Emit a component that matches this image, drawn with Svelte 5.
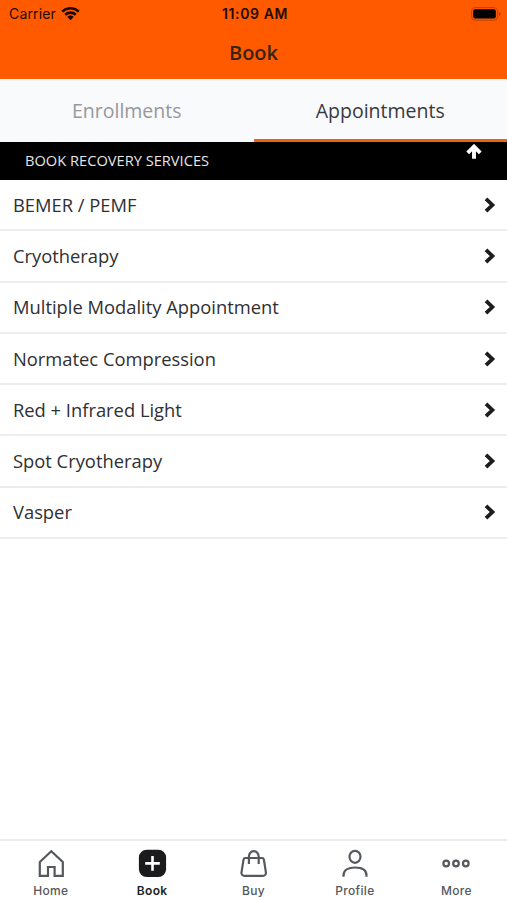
<script lang="ts">
  const tabs = ['Enrollments', 'Appointments'];
  let activeTab = $state('Appointments');

  const services = [
    'BEMER / PEMF',
    'Cryotherapy',
    'Multiple Modality Appointment',
    'Normatec Compression',
    'Red + Infrared Light',
    'Spot Cryotherapy',
    'Vasper'
  ];

  const navItems = ['Home', 'Book', 'Buy', 'Profile', 'More'];
  let activeNav = $state('Book');
</script>

<div class="app">
  <header class="header">
    <div class="status-bar">
      <div class="carrier">
        <span>Carrier</span>
        <svg class="wifi" width="19" height="14" viewBox="0 0 19 14">
          <path d="M1.2 4.6a12 12 0 0 1 16.6 0M4.2 7.7a7.7 7.7 0 0 1 10.6 0" fill="none" stroke="currentColor" stroke-width="2.6" />
          <path d="M6.2 9.8a4.8 4.8 0 0 1 6.6 0L9.5 13.2z" fill="currentColor" />
        </svg>
      </div>
      <span class="time">11:09 AM</span>
      <div class="battery">
        <svg width="30" height="14" viewBox="0 0 30 14">
          <rect x="0.6" y="0.6" width="26" height="12.6" rx="3.6" fill="none" stroke="#b84206" stroke-width="1" />
          <rect x="2.2" y="2.3" width="22.6" height="9.2" rx="2" fill="#000" />
          <path d="M28 5v4c1.8-.5 1.8-3.5 0-4z" fill="#a33a05" />
        </svg>
      </div>
    </div>
    <h1 class="title">Book</h1>
  </header>

  <div class="tabs">
    {#each tabs as tab}
      <button class="tab" class:tab-active={activeTab === tab} onclick={() => (activeTab = tab)}>
        {tab}
      </button>
    {/each}
  </div>

  <main class="content">
    <div class="section-head">
      <h2 class="section-title">BOOK RECOVERY SERVICES</h2>
      <svg class="arrow-up" width="16" height="16" viewBox="0 0 16 16">
        <path d="M1.7 8.8 8 2.6l6.3 6.2M8 3.2v11.6" fill="none" stroke="#fff" stroke-width="3.9" />
      </svg>
    </div>

    <div class="list">
      {#each services as service}
        <button class="row">
          <span>{service}</span>
          <svg width="12" height="16" viewBox="0 0 12 16">
            <path d="M2 1.8 8.4 8 2 14.2" fill="none" stroke="#1d1d1d" stroke-width="3.8" />
          </svg>
        </button>
      {/each}
    </div>
  </main>

  <nav class="nav">
    {#each navItems as item}
      <button class="nav-item" class:nav-active={activeNav === item} onclick={() => (activeNav = item)}>
        <svg width="30" height="30" viewBox="0 0 30 30" fill="none" stroke="currentColor" stroke-width="2.2">
          {#if item === 'Home'}
            <path d="M3.8 13 15.3 2.2 26.8 13v13.900h-8.200v-8.900h-6.600v8.900H3.800z" />
          {:else if item === 'Book'}
            <rect x="1.9" y="0.8" width="27.2" height="27.2" rx="7.8" fill="#1b1b1d" stroke="none" />
            <path d="M15.500 7.100v14.600M8.200 14.400h14.600" stroke="#fff" stroke-width="2.6" />
          {:else if item === 'Buy'}
            <path d="M6.500 9h16.400a2 2 0 0 1 2 1.600l2 12.800a3 3 0 0 1-3 3.500H5.500a3 3 0 0 1-3-3.500l2-12.800a2 2 0 0 1 2-1.600zM9.900 15V7.700a4.900 5.500 0 0 1 9.800 0V15" />
          {:else if item === 'Profile'}
            <ellipse cx="15" cy="7.800" rx="5.500" ry="6" />
            <path d="M3.500 27.800v-1.500c0-5.500 5-7.800 11.500-7.800s11.500 2.300 11.500 7.800v1.500" />
          {:else}
            <circle cx="5.2" cy="14.500" r="2.800" />
            <circle cx="15" cy="14.500" r="2.800" />
            <circle cx="24.800" cy="14.500" r="2.800" />
          {/if}
        </svg>
        <span>{item}</span>
      </button>
    {/each}
  </nav>
</div>

<style>
  :global(body) {
    background: #fff;
  }

  .app {
    display: flex;
    flex-direction: column;
    height: 100vh;
    overflow: hidden;
    font-family: 'Open Sans', 'Noto Sans', sans-serif;
    color: #2f3033;
  }

  button {
    border: none;
    background: none;
    padding: 0;
    margin: 0;
    font: inherit;
    color: inherit;
    cursor: pointer;
  }

  svg {
    display: block;
    flex-shrink: 0;
  }

  /* Header */
  .header {
    height: 79px;
    flex-shrink: 0;
    background: #ff5a00;
  }

  .status-bar {
    display: grid;
    grid-template-columns: 1fr auto 1fr;
    align-items: center;
    height: 27px;
    padding: 0 6px 0 9px;
    font-family: Inter, Roboto, sans-serif;
    font-size: 14px;
    color: #220b00;
  }

  .carrier {
    display: flex;
    align-items: center;
    gap: 5px;
    letter-spacing: 0.15px;
  }

  .wifi {
    color: #1a0800;
  }

  .time {
    font-weight: 600;
    letter-spacing: 0.6px;
  }

  .battery {
    justify-self: end;
  }

  .title {
    margin: 0;
    line-height: 52px;
    text-align: center;
    font-size: 20px;
    font-weight: 600;
    color: #382414;
  }

  /* Tabs */
  .tabs {
    display: flex;
    height: 63px;
    flex-shrink: 0;
    background: #f8fafc;
  }

  .tab {
    flex: 1;
    border-bottom: 3px solid transparent;
    padding-top: 3px;
    font-size: 19.5px;
    color: #97989b;
  }

  .tab-active {
    border-bottom-color: #f06211;
    color: #38393c;
  }

  /* Services */
  .content {
    flex: 1;
  }

  .section-head {
    display: flex;
    justify-content: space-between;
    height: 38px;
    padding: 0 25px;
    background: #000;
  }

  .section-title {
    margin: 0;
    line-height: 36px;
    font-size: 14.65px;
    font-weight: 400;
    color: #e6e6e6;
  }

  .arrow-up {
    margin-top: 2px;
  }

  .row {
    display: flex;
    align-items: center;
    justify-content: space-between;
    box-sizing: border-box;
    width: 100%;
    height: 51.3px;
    padding: 0 11px 0 13px;
    border-bottom: 2px solid #ededef;
    font-size: 18.35px;
    line-height: 24px;
  }

  /* Bottom navigation */
  .nav {
    display: flex;
    box-sizing: border-box;
    height: 61px;
    flex-shrink: 0;
    border-top: 2px solid #ebebed;
  }

  .nav-item {
    display: flex;
    flex: 1;
    flex-direction: column;
    align-items: center;
    padding-top: 8px;
    font-family: Inter, 'Noto Sans', sans-serif;
    font-size: 12px;
    font-weight: 500;
    letter-spacing: 0.3px;
    line-height: 24px;
    color: #55585c;
  }

  .nav-active {
    font-weight: 600;
    color: #222326;
  }
</style>
